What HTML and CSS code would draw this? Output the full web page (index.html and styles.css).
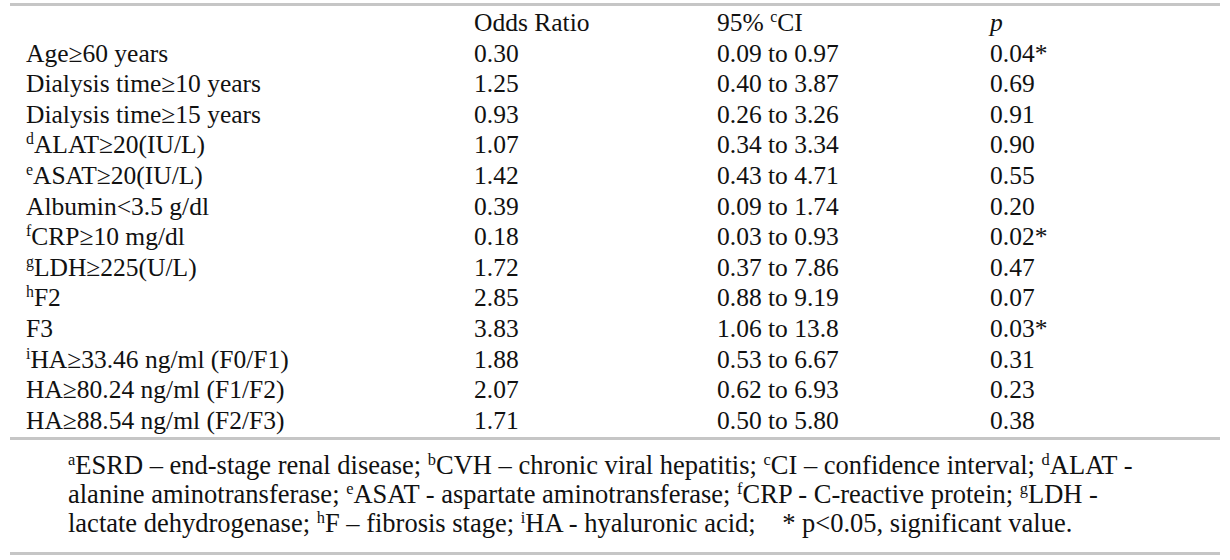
FILE: index.html
```html
<!DOCTYPE html>
<html>
<head>
<meta charset="utf-8">
<link rel="stylesheet" href="styles.css">
</head>
<body>
<div class="wrap">
<table class="odds">
  <colgroup>
    <col class="c1"><col class="c2"><col class="c3"><col class="c4">
  </colgroup>
  <thead>
    <tr><th></th><th>Odds Ratio</th><th>95% <sup>c</sup>CI</th><th><i>p</i></th></tr>
  </thead>
  <tbody>
    <tr><td>Age≥60 years</td><td>0.30</td><td>0.09 to 0.97</td><td>0.04*</td></tr>
    <tr><td>Dialysis time≥10 years</td><td>1.25</td><td>0.40 to 3.87</td><td>0.69</td></tr>
    <tr><td>Dialysis time≥15 years</td><td>0.93</td><td>0.26 to 3.26</td><td>0.91</td></tr>
    <tr><td><sup>d</sup>ALAT≥20(IU/L)</td><td>1.07</td><td>0.34 to 3.34</td><td>0.90</td></tr>
    <tr><td><sup>e</sup>ASAT≥20(IU/L)</td><td>1.42</td><td>0.43 to 4.71</td><td>0.55</td></tr>
    <tr><td>Albumin&lt;3.5 g/dl</td><td>0.39</td><td>0.09 to 1.74</td><td>0.20</td></tr>
    <tr><td><sup>f</sup>CRP≥10 mg/dl</td><td>0.18</td><td>0.03 to 0.93</td><td>0.02*</td></tr>
    <tr><td><sup>g</sup>LDH≥225(U/L)</td><td>1.72</td><td>0.37 to 7.86</td><td>0.47</td></tr>
    <tr><td><sup>h</sup>F2</td><td>2.85</td><td>0.88 to 9.19</td><td>0.07</td></tr>
    <tr><td>F3</td><td>3.83</td><td>1.06 to 13.8</td><td>0.03*</td></tr>
    <tr><td><sup>i</sup>HA≥33.46 ng/ml (F0/F1)</td><td>1.88</td><td>0.53 to 6.67</td><td>0.31</td></tr>
    <tr><td>HA≥80.24 ng/ml (F1/F2)</td><td>2.07</td><td>0.62 to 6.93</td><td>0.23</td></tr>
    <tr><td>HA≥88.54 ng/ml (F2/F3)</td><td>1.71</td><td>0.50 to 5.80</td><td>0.38</td></tr>
  </tbody>
  <tfoot>
    <tr><td colspan="4" class="notes"><sup>a</sup>ESRD – end-stage renal disease; <sup>b</sup>CVH – chronic viral hepatitis; <sup>c</sup>CI – confidence interval; <sup>d</sup>ALAT -<br>alanine aminotransferase; <sup>e</sup>ASAT - aspartate aminotransferase; <sup>f</sup>CRP - C-reactive protein; <sup>g</sup>LDH -<br>lactate dehydrogenase; <sup>h</sup>F – fibrosis stage; <sup>i</sup>HA - hyaluronic acid;&nbsp;&nbsp;&nbsp; * p&lt;0.05, significant value.</td></tr>
  </tfoot>
</table>
</div>
</body>
</html>
```
FILE: styles.css
```css
html, body {
  margin: 0;
  padding: 0;
  background: #ffffff;
}
.wrap {
  padding: 3px 10px 0 10px;
}
.odds {
  width: 1210px;
  border-collapse: collapse;
  table-layout: fixed;
  font-family: "Liberation Serif", "Times New Roman", serif;
  font-size: 25.5px;
  line-height: 30.6px;
  color: #111111;
  border-top: 3px solid #c6c6c6;
}
.c1 { width: 464px; }
.c2 { width: 243px; }
.c3 { width: 273px; }
.c4 { width: 230px; }
.odds th, .odds td {
  padding: 0;
  text-align: left;
  font-weight: normal;
  white-space: nowrap;
  vertical-align: baseline;
}
.odds thead th {
  padding-top: 2px;
}
.odds tbody td:first-child {
  padding-left: 16px;
}
.odds tbody tr:last-child td {
  padding-bottom: 1px;
}
.odds sup {
  font-size: 0.62em;
  line-height: 0;
  vertical-align: 0.55em;
}
.odds tfoot td.notes {
  border-top: 3px solid #c6c6c6;
  border-bottom: 3px solid #c6c6c6;
  padding: 11px 0 14px 58px;
  font-size: 26.5px;
  line-height: 29px;
  white-space: nowrap;
}
```
